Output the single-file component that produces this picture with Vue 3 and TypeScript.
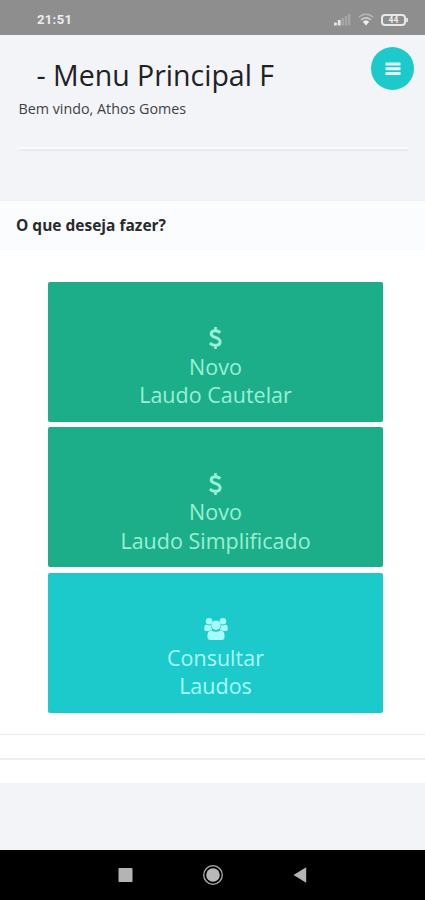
<script setup lang="ts">
interface Action {
  icon: 'dollar' | 'group'
  lines: [string, string]
  tone: 'green' | 'cyan'
}

const actions: Action[] = [
  { icon: 'dollar', lines: ['Novo', 'Laudo Cautelar'], tone: 'green' },
  { icon: 'dollar', lines: ['Novo', 'Laudo Simplificado'], tone: 'green' },
  { icon: 'group', lines: ['Consultar', 'Laudos'], tone: 'cyan' },
]
</script>

<template>
  <div class="screen">
    <div class="status">
      <span class="clock">21:51</span>
      <div class="indicators">
        <svg class="signal" width="17" height="12" viewBox="0 0 17 12">
          <g fill="#e8e8e8">
            <rect x="0" y="8.5" width="2.8" height="3" rx=".6" />
            <rect x="3.8" y="6" width="2.8" height="5.5" rx=".6" />
          </g>
          <g fill="#a6a6a6">
            <rect x="7.4" y="4" width="2.6" height="7.5" rx=".6" />
            <rect x="10.8" y="2" width="2.4" height="9.5" rx=".6" />
            <rect x="14" y="0" width="2.4" height="11.5" rx=".6" />
          </g>
        </svg>
        <svg class="wifi" width="16" height="13" viewBox="0 0 16 13" fill="none" stroke-width="1.6">
          <path d="M.8 4.2Q8-2 15.2 4.2" stroke="#b2b2b2" />
          <path d="M3 7Q8 2.6 13 7" stroke="#cacaca" />
          <path d="M4.8 8.8Q8 5.8 11.2 8.8L8 12.4Z" fill="#eee" />
        </svg>
        <div class="battery"><span>44</span></div>
      </div>
    </div>

    <header class="heading">
      <div class="titles">
        <h1>- Menu Principal F</h1>
        <p>Bem vindo, Athos Gomes</p>
      </div>
      <button class="menu" aria-label="Menu">
        <svg width="16" height="14" viewBox="0 0 16 14" fill="#e6ffff">
          <rect x=".5" y=".5" width="15" height="3" rx=".5" />
          <rect x=".5" y="5.2" width="15" height="3" rx=".5" />
          <rect x=".5" y="9.9" width="15" height="3" rx=".5" />
        </svg>
      </button>
    </header>

    <main class="panel">
      <h2>O que deseja fazer?</h2>
      <div class="actions">
        <button v-for="action in actions" :key="action.lines.join(' ')" class="action" :class="action.tone">
          <span class="icon">
            <svg v-if="action.icon === 'dollar'" width="13" height="22" viewBox="0 0 13 22" fill="none" stroke="currentColor" stroke-width="3">
              <path d="M6.5 0V4M6.5 18V22" stroke-width="2.6" />
              <path d="M11.3 5.7C9.8 4.3 7.9 3.6 6 3.7C3.6 3.8 2.2 5 2.2 6.9C2.2 11.2 11.1 9.6 11.1 14.7C11.1 17 9.3 18.2 6.6 18.3C4.3 18.4 2.3 17.4 .9 16" />
            </svg>
            <svg v-else width="24" height="24" viewBox="0 0 24 24" fill="currentColor">
              <circle cx="5.1" cy="4.3" r="3.3" />
              <circle cx="18.9" cy="4.3" r="3.3" />
              <path d="M2.2 7.5Q5 9.2 7 8.2Q6.5 11 8.5 12.7Q5.6 13 4.5 14H2Q.2 14 .2 11.8Q.2 8 2.2 7.5Z" />
              <path d="M21.8 7.5Q19 9.2 17 8.2Q17.5 11 15.5 12.7Q18.4 13 19.5 14H22Q23.8 14 23.8 11.8Q23.8 8 21.8 7.5Z" />
              <circle cx="12" cy="8.3" r="4.7" />
              <path d="M7.2 13.2Q12 16.5 16.8 13.2Q20.6 13.4 20.6 19.8Q20.6 23 17.6 23H6.4Q3.4 23 3.4 19.8Q3.4 13.4 7.2 13.2Z" />
            </svg>
          </span>
          <span v-for="line in action.lines" :key="line" class="line">{{ line }}</span>
        </button>
      </div>
      <div class="strip"></div>
      <div class="strip last"></div>
    </main>

    <nav class="system">
      <svg width="15" height="15" viewBox="0 0 15 15"><rect x=".5" y="0" width="14" height="14" rx=".8" fill="#b4b4b4" /></svg>
      <svg width="22" height="22" viewBox="0 0 22 22">
        <circle cx="11" cy="11" r="9.3" fill="none" stroke="#adadad" stroke-width="1.3" />
        <circle cx="11" cy="11" r="6.8" fill="#b8b8b8" />
      </svg>
      <svg width="14" height="16" viewBox="0 0 14 16"><path d="M.5 8L13.2.3V15.7Z" fill="#b4b4b4" /></svg>
    </nav>
  </div>
</template>

<style>
body {
  background: #f3f4f8;
}
</style>

<style scoped>
.screen {
  box-sizing: border-box;
  width: 425px;
  height: 900px;
  display: flex;
  flex-direction: column;
  overflow: hidden;
  background: #f3f4f8;
  color: #202124;
  font-family: "Open Sans", "Noto Sans", sans-serif;
}
.status {
  height: 35px;
  flex: none;
  box-sizing: border-box;
  padding: 4px 18px 0 37px;
  display: flex;
  align-items: center;
  justify-content: space-between;
  background: #8e8e8e;
}
.clock {
  color: #ededed;
  font: 700 13px/16px Roboto, sans-serif;
  letter-spacing: .35px;
}
.indicators {
  display: flex;
  align-items: center;
  gap: 7px;
}
.battery {
  position: relative;
  box-sizing: border-box;
  width: 25px;
  height: 12px;
  margin-right: 1px;
  border: 2px solid #e8e8e8;
  border-radius: 4px;
  display: flex;
  align-items: center;
  justify-content: center;
  color: #ececec;
  font: 700 8.5px/8px Roboto, sans-serif;
}
.battery::after {
  content: "";
  position: absolute;
  right: -4px;
  top: 2px;
  width: 2px;
  height: 4px;
  background: #dedede;
}
.heading {
  height: 116px;
  flex: none;
  box-sizing: border-box;
  margin: 0 17px 0 19px;
  display: flex;
  justify-content: space-between;
  border-bottom: 2px solid #e9eaed;
  box-shadow: inset 0 -2px #fafbfc;
}
.titles {
  padding-top: 21px;
}
h1 {
  margin: 0 0 0 17.5px;
  font-size: 28.5px;
  font-weight: 400;
  line-height: 38px;
  white-space: nowrap;
}
p {
  margin: 5px 0 0 -.5px;
  color: #404145;
  font-size: 14.3px;
  line-height: 20px;
}
button {
  border: 0;
  padding: 0;
  font: inherit;
}
.menu {
  width: 43px;
  height: 43px;
  margin: 12px -6px 0 0;
  border-radius: 50%;
  background: #1ccacb;
  display: grid;
  place-items: center;
}
.panel {
  margin-top: 49px;
  flex: none;
  background: #fff;
}
h2 {
  box-sizing: border-box;
  height: 50px;
  margin: 0;
  padding: 0 16px;
  background: #fafcfd;
  border-top: 1px solid #f0f1f4;
  border-bottom: 1px solid #f7f8f9;
  color: #292a2e;
  font-size: 15.5px;
  font-weight: 700;
  line-height: 48px;
}
.actions {
  height: 484px;
  box-sizing: border-box;
  padding: 31.5px 42px 0 48px;
  display: flex;
  flex-direction: column;
  gap: 5.5px;
}
.action {
  height: 140px;
  box-sizing: border-box;
  padding-top: 42px;
  border-radius: 2px;
  display: flex;
  flex-direction: column;
  align-items: center;
  font-size: 21.5px;
  line-height: 28.7px;
}
.icon {
  height: 29px;
  display: grid;
  place-items: center;
}
.line {
  display: block;
}
.green {
  background: #1cae89;
  color: #98f0d6;
}
.cyan {
  background: #1dcacb;
  color: #a8f9fa;
}
.strip {
  height: 24px;
  box-sizing: border-box;
  border-top: 1px solid #e9eaec;
}
.last {
  height: 25px;
  border-top: 2px solid #eeeff1;
}
.system {
  height: 50px;
  flex: none;
  box-sizing: border-box;
  margin-top: auto;
  padding-left: 117.5px;
  background: #000;
  display: flex;
  align-items: center;
}
.system svg:nth-child(2) {
  margin-left: 69.5px;
}
.system svg:nth-child(3) {
  margin-left: 69px;
}
</style>
